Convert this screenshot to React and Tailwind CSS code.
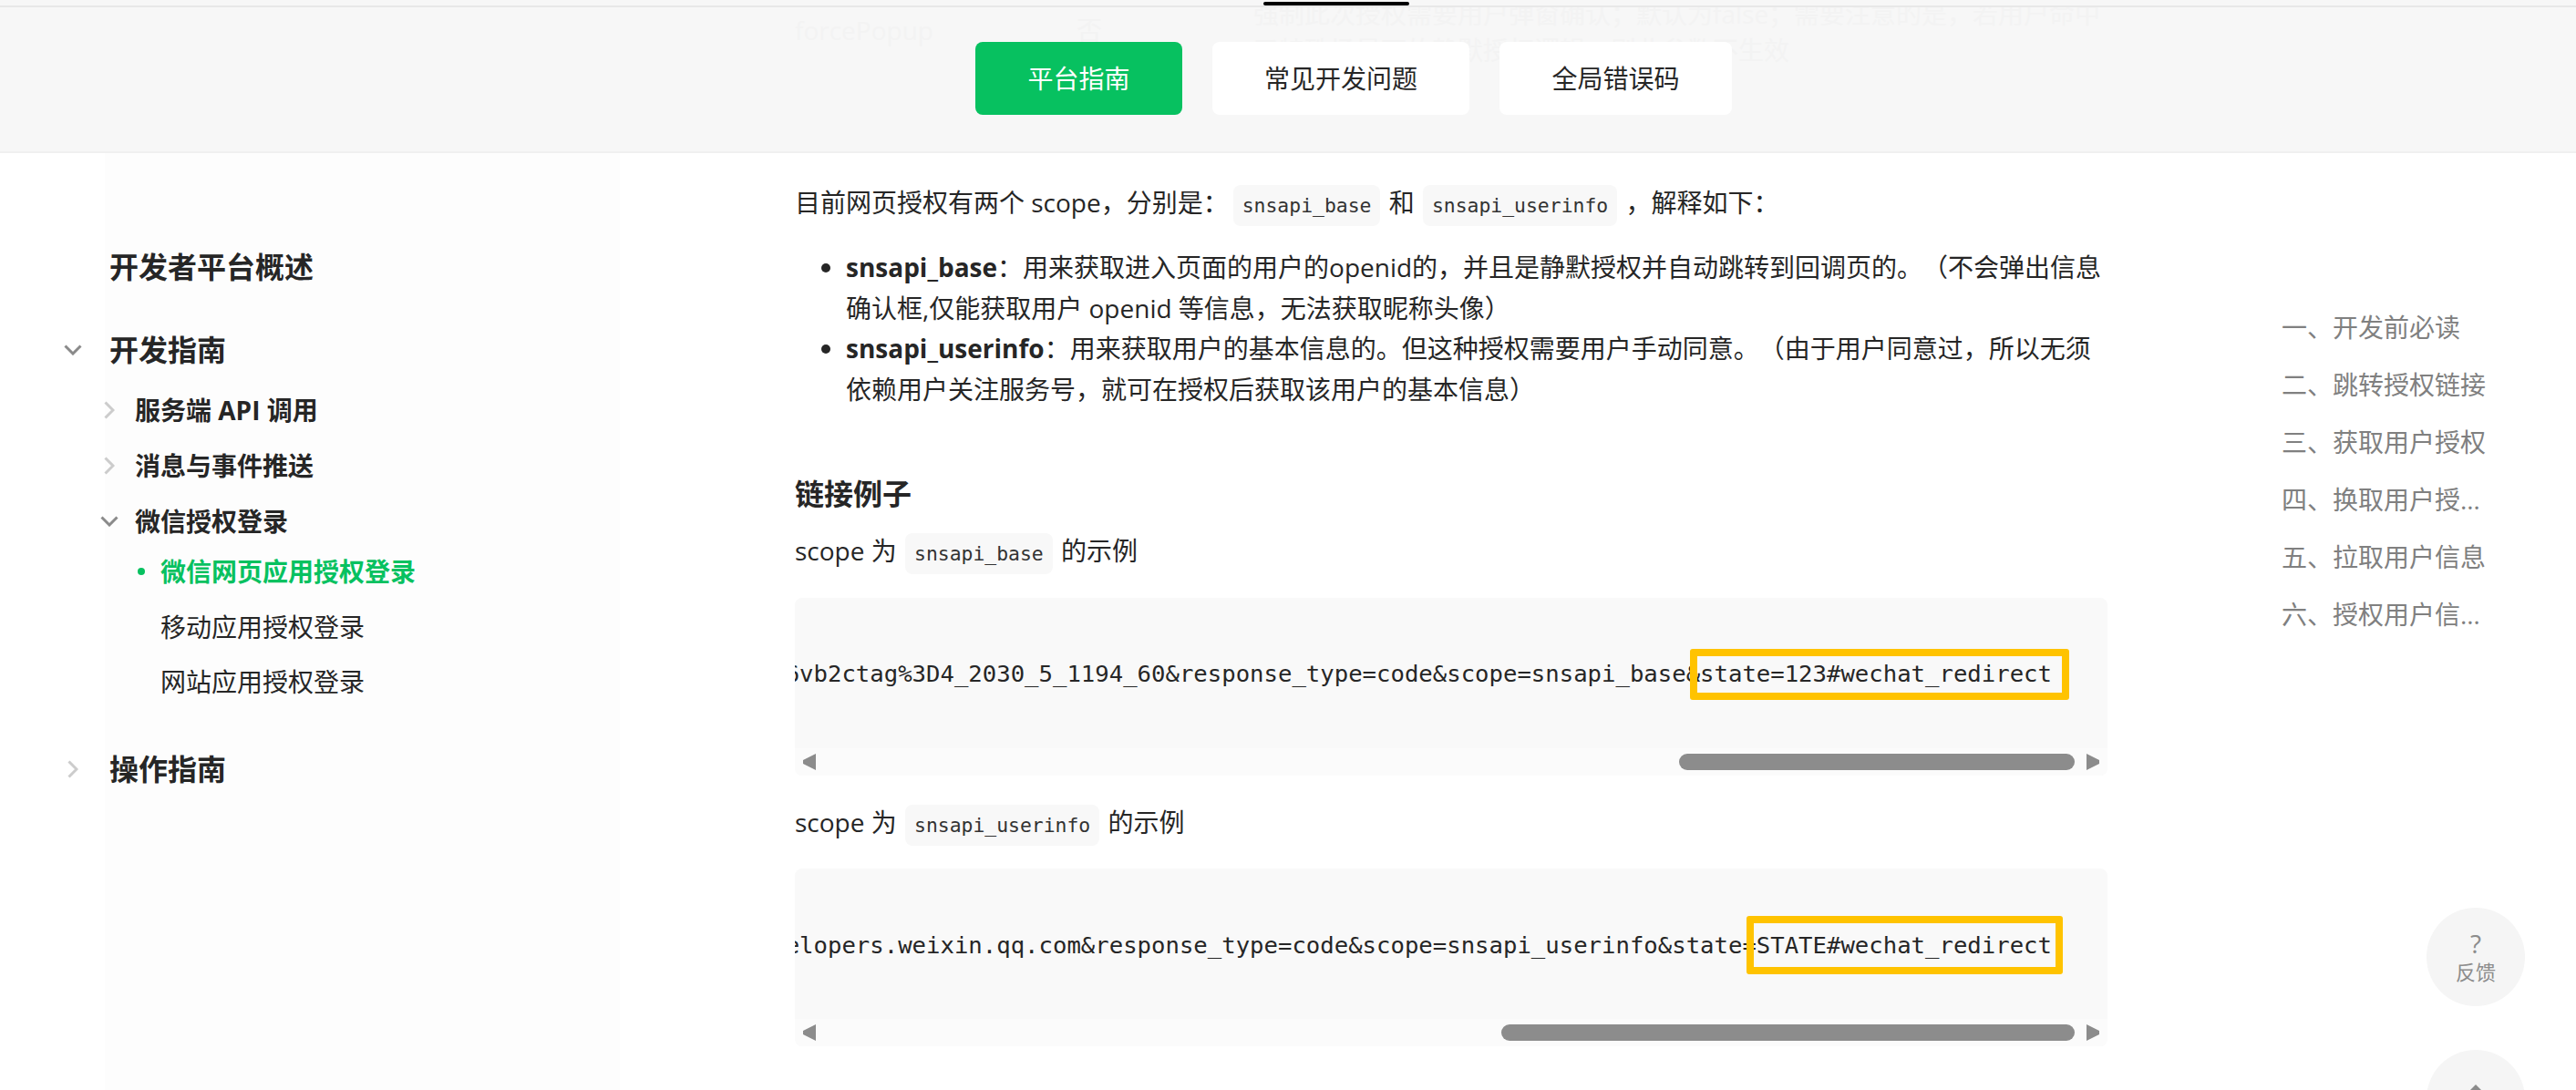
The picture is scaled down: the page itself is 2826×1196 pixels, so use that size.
import React from 'react';

const sans = "font-['Open_Sans','Noto_Sans_CJK_SC',sans-serif]";

const tabs = [
  { label: '平台指南', width: 'w-[227px]', active: true },
  { label: '常见开发问题', width: 'w-[282px]' },
  { label: '全局错误码', width: 'w-[255px]' },
];

const toc = [
  '一、开发前必读',
  '二、跳转授权链接',
  '三、获取用户授权',
  '四、换取用户授权信息',
  '五、拉取用户信息',
  '六、授权用户信息变更',
];

const urlBase =
  'https://open.weixin.qq.com/connect/oauth2/authorize?appid=wx807d86fb6b3d4fd2&redirect_uri=http%3A%2F%2Fdevelopers.weixin.qq.com%3Fa%3D1%26vb2ctag%3D4_2030_5_1194_60&response_type=code&scope=snsapi_base&state=123#wechat_redirect';
const urlUserinfo =
  'https://open.weixin.qq.com/connect/oauth2/authorize?appid=wx807d86fb6b3d4fd2&redirect_uri=http%3A%2F%2Fdevelopers.weixin.qq.com&response_type=code&scope=snsapi_userinfo&state=STATE#wechat_redirect';

const ChevronDown = () => (
  <svg viewBox="0 0 20 12" className="h-[12px] w-[20px] text-[#8a8a8a]" fill="none" stroke="currentColor" strokeWidth="3">
    <path d="M1.500 1.500 10 10l8.500-8.500" />
  </svg>
);

const ChevronRight = () => (
  <svg viewBox="0 0 12 20" className="ml-[4px] h-[20px] w-[12px] text-[#cccccc]" fill="none" stroke="currentColor" strokeWidth="3">
    <path d="M1.500 1.500 10 10l-8.500 8.500" />
  </svg>
);

// one sidebar row: the icon slot keeps every label on its column
const NavRow = ({ icon, row, slot, children }) => (
  <div className={`flex h-[60px] items-center ${row}`}>
    <span className={`flex shrink-0 items-center ${slot}`}>{icon}</span>
    {children}
  </div>
);

const Code = ({ children }) => (
  <code className="mx-[2px] rounded-lg bg-[#f8f8f8] px-[10px] py-[10px] font-['DejaVu_Sans_Mono',monospace] text-[21.400px] leading-none text-[#333]">
    {children}
  </code>
);

const Arrow = ({ dir }) => (
  <svg viewBox="0 0 14 18" className="h-[18px] w-[14px] shrink-0 text-[#8c8c8c]" fill="currentColor">
    {dir === 'left' ? <path d="M14 0v18L0 11V7z" /> : <path d="M0 0v18l14-7V7z" />}
  </svg>
);

const CodeBlock = ({ url, thumb, mark }) => (
  <div className="relative mt-[29px] h-[195px] w-[1440px] overflow-hidden rounded-lg bg-[#f9f9f9]">
    <div className="flex h-[165px] items-center justify-end overflow-hidden pr-[61px] pt-[3px]">
      <span className="shrink-0 whitespace-pre font-['DejaVu_Sans_Mono',monospace] text-[25.650px] text-[#262626]">{url}</span>
    </div>
    <div className="flex h-[30px] items-center bg-[#fbfbfb] pl-[9px]">
      <Arrow dir="left" />
      <div className={`h-[18px] rounded-full bg-[#8c8c8c] ${thumb}`} />
      <div className="ml-[13px]">
        <Arrow dir="right" />
      </div>
    </div>
    <div className={`absolute rounded-[3px] border-[8px] border-[#ffc300] ${mark}`} />
  </div>
);

const App = () => {
  return (
    <div className={`relative h-[1196px] w-[2826px] overflow-hidden bg-white ${sans} text-[28px] text-[#262626] [text-spacing-trim:space-all]`}>
      {/* Header */}
      <header className="relative h-[168px] overflow-hidden border-b-2 border-[#f0f0f0] bg-[#f7f7f7]">
        {/* page content showing faintly through the sticky bar */}
        <div className="absolute inset-x-0 top-[8px] h-[100px] overflow-hidden text-[#f3f3f3]">
          <div className="-mt-[13px] flex items-center pl-[872px] leading-[40px]">
            <span className="w-[309px] pb-[4px]">forcePopup</span>
            <span className="w-[194px] pb-[4px]">否</span>
            <div className="whitespace-nowrap">
              <div>强制此次授权需要用户弹窗确认；默认为false；需要注意的是，若用户命中</div>
              <div>了特殊场景下的静默授权逻辑，则此参数不生效</div>
            </div>
          </div>
        </div>
        <div className="relative h-[8px] border-b-2 border-[#e8e8e8] pt-[2px]">
          <div className="ml-[1386px] h-[4px] w-[160px] rounded-[2px] bg-black" />
        </div>
        <div className="relative ml-[1070px] mt-[38px] flex gap-[33px]">
          {tabs.map((tab) => (
            <div
              key={tab.label}
              className={`flex h-[80px] items-center justify-center rounded-lg ${tab.width} ${
                tab.active ? 'bg-[#07c160] text-white' : 'bg-white text-[#262626]'
              }`}
            >
              {tab.label}
            </div>
          ))}
        </div>
      </header>

      <div className="flex h-[1028px] w-full">
        {/* Sidebar */}
        <aside className="w-[872px] shrink-0 bg-[linear-gradient(to_right,#ffffff_115px,#fdfdfd_115px,#fdfdfd_680px,#ffffff_680px)] pt-[95px]">
          <NavRow row="pl-[70px] text-[32px] font-bold" slot="w-[50px]">开发者平台概述</NavRow>
          <div className="mt-[31px]">
            <NavRow row="pl-[70px] text-[32px] font-bold" slot="w-[50px]" icon={<ChevronDown />}>开发指南</NavRow>
          </div>
          <div className="mt-[6px] flex flex-col gap-[1px]">
            <NavRow row="pl-[110px] font-bold" slot="w-[38px]" icon={<ChevronRight />}>服务端 API 调用</NavRow>
            <NavRow row="pl-[110px] font-bold" slot="w-[38px]" icon={<ChevronRight />}>消息与事件推送</NavRow>
            <NavRow row="pl-[110px] font-bold" slot="w-[38px]" icon={<ChevronDown />}>微信授权登录</NavRow>
          </div>
          <div className="-mt-[5px] flex flex-col">
            <NavRow
              row="pl-[151px] font-bold text-[#07c160]"
              slot="w-[25px]"
              icon={<span className="h-[8px] w-[8px] rounded-full bg-[#07c160]" />}
            >
              微信网页应用授权登录
            </NavRow>
            <NavRow row="pl-[151px] mt-[1px]" slot="w-[25px]">移动应用授权登录</NavRow>
            <NavRow row="pl-[151px]" slot="w-[25px]">网站应用授权登录</NavRow>
          </div>
          <div className="mt-[36px]">
            <NavRow row="pl-[70px] text-[32px] font-bold" slot="w-[50px]" icon={<ChevronRight />}>操作指南</NavRow>
          </div>
        </aside>

        {/* Article */}
        <main className="w-[1440px] shrink-0 pt-[32px] leading-[44.800px]">
          <p className="whitespace-nowrap">
            目前网页授权有两个 scope，分别是：<span className="ml-[3px]" /><Code>snsapi_base</Code> 和 <Code>snsapi_userinfo</Code> ，解释如下：
          </p>
          <ul className="ml-[56px] mt-[26px] list-disc">
            <li>
              <strong>snsapi_base</strong>：用来获取进入页面的用户的openid的，并且是静默授权并自动跳转到回调页的。（不会弹出信息确认框,仅能获取用户 openid 等信息，无法获取昵称头像）
            </li>
            <li>
              <strong>snsapi_userinfo</strong>：用来获取用户的基本信息的。但这种授权需要用户手动同意。（由于用户同意过，所以无须依赖用户关注服务号，就可在授权后获取该用户的基本信息）
            </li>
          </ul>
          <h3 className="mt-[70px] text-[32px] font-bold">链接例子</h3>
          <p className="mt-[17px]">
            scope 为 <Code>snsapi_base</Code> 的示例
          </p>
          <CodeBlock url={urlBase} thumb="ml-[947px] w-[434px]" mark="left-[982px] top-[56px] h-[56px] w-[416px]" />
          <p className="mt-[29px]">
            scope 为 <Code>snsapi_userinfo</Code> 的示例
          </p>
          <CodeBlock url={urlUserinfo} thumb="ml-[752px] w-[629px]" mark="left-[1044px] top-[52px] h-[64px] w-[347px]" />
        </main>

        {/* Table of contents */}
        <nav className="ml-[191px] w-[228px] shrink-0 pt-[159px] text-[#808080]">
          {toc.map((item) => (
            <div key={item} className="flex h-[63px] items-center">
              <span className="truncate">{item}</span>
            </div>
          ))}
        </nav>
      </div>

      {/* Floating buttons */}
      <button className="absolute left-[2662px] top-[996px] flex h-[108px] w-[108px] flex-col items-center justify-center rounded-full bg-[#f5f5f5] text-[#8c8c8c]">
        <span className="text-[28px] leading-[32px]">?</span>
        <span className="text-[22px] leading-[30px]">反馈</span>
      </button>
      <button className="absolute left-[2662px] top-[1152px] flex h-[108px] w-[108px] justify-center rounded-full bg-[#f5f5f5]">
        <svg viewBox="0 0 20 12" className="mt-[38px] h-[12px] w-[20px] text-[#8c8c8c]" fill="currentColor">
          <path d="M10 0l10 10v2H0v-2z" />
        </svg>
      </button>
    </div>
  );
};

export default App;
